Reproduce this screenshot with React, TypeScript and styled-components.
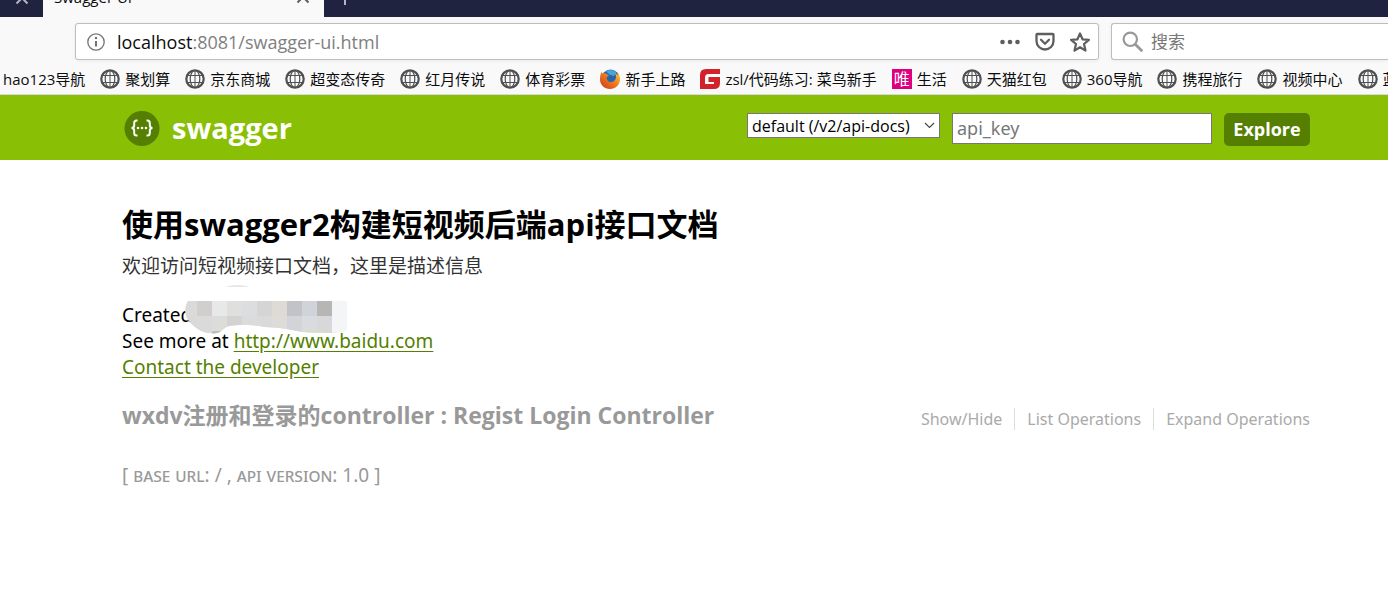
import React from 'react';
import styled, { createGlobalStyle } from 'styled-components';

const uiFont = '"Open Sans", "Noto Sans CJK SC", sans-serif';
const docFont = '"Noto Sans", "Noto Sans CJK SC", sans-serif';
const headFont = '"Open Sans", "Noto Sans CJK SC", sans-serif';

const GlobalStyle = createGlobalStyle`
  * { box-sizing: border-box; }
  body { margin: 0; background: #fff; font-family: ${docFont}; overflow-x: hidden; }
  h1, h2, p, ul { margin: 0; padding: 0; }
  ul { list-style: none; }
  button, input, select { font-family: inherit; }
`;

const TabStrip = styled.div`
  display: flex;
  align-items: flex-end;
  height: 17px;
  overflow: hidden;
  background: #202340;
  font-family: ${uiFont};
`;

const TabButton = styled.button<{ $width: number; $dark?: boolean }>`
  display: flex;
  align-items: center;
  justify-content: center;
  width: ${(p) => p.$width}px;
  height: 38px;
  padding: 0;
  border: 0;
  background: none;
  color: ${(p) => (p.$dark ? '#5e5e5f' : '#b4b5c2')};
`;

const ActiveTab = styled.div`
  display: flex;
  align-items: center;
  justify-content: space-between;
  width: 281px;
  height: 40px;
  padding-left: 11px;
  background: #f9f9fa;
  color: #0c0c0d;
  font-size: 15px;
  line-height: 20px;
`;

const NavBar = styled.div`
  display: flex;
  gap: 12px;
  padding: 6px 0 3px 75px;
  background: #f9f9fa;
  font-family: ${uiFont};
`;

const Field = styled.div<{ $search?: boolean }>`
  display: flex;
  align-items: center;
  flex: ${(p) => (p.$search ? '0 0 277px' : '1 1 auto')};
  min-width: 0;
  height: 37px;
  gap: ${(p) => (p.$search ? 7 : 11)}px;
  padding: 0 ${(p) => (p.$search ? 0 : 7)}px 0 10px;
  border: 1px solid #bdbdbe;
  border-right-width: ${(p) => (p.$search ? 0 : 1)}px;
  border-radius: ${(p) => (p.$search ? '3px 0 0 3px' : '3px')};
  background: #fff;
  box-shadow: 0 1px 4px rgba(0, 0, 0, 0.06);
`;

const Address = styled.div`
  flex: 1;
  min-width: 0;
  overflow: hidden;
  white-space: nowrap;
  color: #808080;
  font-size: 18px;
  line-height: 26px;
`;

const Host = styled.span`
  color: #0c0c0d;
`;

const SearchInput = styled.input`
  flex: 1;
  min-width: 0;
  padding: 0;
  border: 0;
  outline: 0;
  background: none;
  font-size: 17px;
  &::placeholder { color: #777; opacity: 1; }
`;

const FieldActions = styled.div`
  display: flex;
  align-items: center;
  gap: 13px;
`;

const IconButton = styled.button`
  display: flex;
  padding: 0;
  border: 0;
  background: none;
  color: #5e5e5f;
`;

const Bookmarks = styled.ul`
  display: flex;
  gap: 15px;
  height: 32px;
  padding: 1px 0 0 3px;
  overflow: hidden;
  border-bottom: 1px solid #d9d9dc;
  background: #f9f9fa;
  font-family: ${uiFont};
`;

const BookmarkLink = styled.a`
  display: flex;
  align-items: center;
  gap: 5px;
  height: 30px;
  color: #0c0c0d;
  font-size: 15px;
  line-height: 20px;
  text-decoration: none;
  white-space: nowrap;
  svg { flex: none; }
`;

const LifeBadge = styled.span`
  width: 20px;
  height: 20px;
  background: #e0007f;
  color: #fff;
  font-size: 16px;
  line-height: 20px;
  text-align: center;
`;

const Header = styled.header`
  display: flex;
  justify-content: space-between;
  align-items: flex-start;
  height: 65px;
  padding: 15px 78px 0 124px;
  background: #89bf04;
`;

const Brand = styled.a`
  display: flex;
  align-items: center;
  gap: 12px;
  color: #fff;
  font: 700 29px/34px ${headFont};
  text-decoration: none;
`;

const Controls = styled.form`
  display: flex;
  align-items: flex-start;
  gap: 12px;
  padding-top: 3px;
`;

const SelectBox = styled.div`
  display: grid;
  align-items: center;
  justify-items: end;
  width: 193px;
  height: 25px;
  font-family: ${uiFont};
  > * { grid-area: 1 / 1; }
  svg { margin-right: 5px; pointer-events: none; }
`;

const Select = styled.select`
  width: 100%;
  height: 25px;
  padding: 0 20px 0 4px;
  border: 1px solid #777;
  border-radius: 0;
  background: #fff;
  color: #000;
  font-size: 16px;
  line-height: 22px;
  appearance: none;
`;

const KeyInput = styled.input`
  width: 260px;
  height: 31px;
  padding: 0 4px 2px;
  border: 1px solid #777;
  background: #fff;
  font-size: 18px;
  &::placeholder { color: #777; opacity: 1; }
`;

const ExploreButton = styled.button`
  width: 86px;
  height: 33px;
  padding: 0 0 2px;
  border: 0;
  border-radius: 5px;
  background: #547f00;
  color: #fff;
  font-family: ${headFont};
  font-size: 18px;
  font-weight: 700;
`;

const Content = styled.main`
  padding: 41px 78px 0 122px;
`;

const Title = styled.h1`
  color: #000;
  font: 700 31px/46px ${headFont};
`;

const Description = styled.p`
  color: #333;
  font-size: 19px;
  line-height: 38px;
`;

const Info = styled.div`
  position: relative;
  padding-top: 17px;
  color: #000;
  font-size: 19px;
  line-height: 26px;
`;

const Mosaic = styled.svg`
  position: absolute;
  top: 0;
  left: 63px;
`;

const GreenLink = styled.a`
  color: #547f00;
  text-underline-offset: 3px;
`;

const Resource = styled.section`
  display: flex;
  align-items: flex-start;
  justify-content: space-between;
  padding-top: 17px;
`;

const ResourceTitle = styled.h2`
  color: #999;
  font: 700 23px/36px ${headFont};
`;

const Options = styled.ul`
  display: flex;
  padding-top: 11px;
  li + li { margin-left: 12px; padding-left: 12px; border-left: 1px solid #ddd; }
`;

const OptionLink = styled.a`
  color: #aaa;
  font-size: 16px;
  line-height: 21px;
  text-decoration: none;
`;

const Version = styled.p`
  padding-top: 28px;
  color: #999;
  font-size: 19px;
  line-height: 28px;
`;

const SmallCaps = styled.span`
  font-variant: small-caps;
`;

const Cross = () => (
  <svg width="14" height="14" viewBox="0 0 14 14" fill="none" stroke="currentColor" strokeWidth="2">
    <path d="M1.500 1.500l11 11M12.500 1.500l-11 11" />
  </svg>
);

const Plus = () => (
  <svg width="16" height="16" viewBox="0 0 16 16" fill="none" stroke="currentColor" strokeWidth="2">
    <path d="M8 1v14M1 8h14" />
  </svg>
);

const Globe = () => (
  <svg width="20" height="20" viewBox="0 0 20 20" fill="none" stroke="#505053">
    <circle cx="10" cy="10" r="8.700" strokeWidth="2.200" />
    <ellipse cx="10" cy="10" rx="4.800" ry="8.500" strokeWidth="1.200" />
    <path d="M10 1v18M2.500 6.500h15M2.500 13.500h15" strokeWidth="1" />
  </svg>
);

const Firefox = () => (
  <svg width="20" height="20" viewBox="0 0 20 20">
    <defs>
      <linearGradient id="fox" x1="1" y1="0" x2="0" y2="1">
        <stop offset="0" stopColor="#ffcf3a" />
        <stop offset=".45" stopColor="#f07c1f" />
        <stop offset="1" stopColor="#c9351c" />
      </linearGradient>
    </defs>
    <circle cx="10.500" cy="9.500" r="9" fill="#2466a8" />
    <path d="M6 2.500c3-2.500 8-2 10.500 1.500l-3 3-4-1.500z" fill="#49a5dc" />
    <path d="M1.500 2.500C1.700 4 2.200 4.300 3 4.500 4.500 4 6 4.300 7 5.200l2 1.300-2.500 1.700c.3 3.300 2 4.900 4.300 4.800 2.800-.1 4.200-1.700 5-3.500.4-2 .2-3.500-.8-5 1.500.4 2.200 1 2.700 1.800V3.200C19 5.500 20 8 20 10.500 19.800 16 15.500 20 10 20 4.500 20 0 15.800 0 10.500 0 7.500.6 5 1.500 2.500z" fill="url(#fox)" />
  </svg>
);

const Gitee = () => (
  <svg width="20" height="20" viewBox="0 0 20 20">
    <path d="M6 0h14v5H8.500Q5 5 5 8.500V15h9v-2H8.500V8H20v6q0 6-6 6H0V6q0-6 6-6z" fill="#d2232c" />
  </svg>
);

const InfoIcon = () => (
  <svg width="20" height="20" viewBox="0 0 20 20" fill="none" stroke="#737373">
    <circle cx="10" cy="10" r="8.200" strokeWidth="1.300" />
    <path d="M10 9v5.500" strokeWidth="2" />
    <circle cx="10" cy="6" r="1.200" fill="#737373" stroke="none" />
  </svg>
);

const Dots = () => (
  <svg width="22" height="22" viewBox="0 0 22 22" fill="currentColor">
    <circle cx="3.500" cy="11" r="2.300" />
    <circle cx="11" cy="11" r="2.300" />
    <circle cx="18.500" cy="11" r="2.300" />
  </svg>
);

const Pocket = () => (
  <svg width="22" height="22" viewBox="0 0 22 22" fill="none" stroke="currentColor" strokeWidth="2.300" strokeLinecap="round" strokeLinejoin="round">
    <path d="M3.300 3h15.400q.8 0 .8.800v6.200a8.500 8.500 0 0 1-17 0V3.800q0-.8.800-.8z" />
    <path d="M7 8.800l4 3.900 4-3.900" />
  </svg>
);

const Star = () => (
  <svg width="22" height="22" viewBox="0 0 22 22" fill="none" stroke="currentColor" strokeWidth="2.200" strokeLinejoin="round">
    <path d="M11 2.400l2.500 5.900 6.400.5-4.900 4.200 1.500 6.600-5.500-3.400-5.500 3.400L7 13 2.100 8.800l6.400-.5z" />
  </svg>
);

const Magnifier = () => (
  <svg width="22" height="22" viewBox="0 0 22 22" fill="none" stroke="#999">
    <circle cx="8.300" cy="8.300" r="6.700" strokeWidth="2.200" />
    <path d="M13 13l7.300 7.300" strokeWidth="2.800" />
  </svg>
);

const SwaggerMark = () => (
  <svg width="36" height="36" viewBox="0 0 36 36">
    <circle cx="18" cy="18.500" r="17.500" fill="#547f00" />
    <g fill="none" stroke="#fff" strokeWidth="2">
      <path d="M13.500 10.500h-1q-2.300 0-2.300 2.500v2.200q0 2.800-2.700 2.800 2.700 0 2.700 2.800v2.200q0 2.500 2.300 2.500h1" />
      <path d="M22.500 10.500h1q2.300 0 2.300 2.500v2.200q0 2.800 2.700 2.800-2.700 0-2.700 2.800v2.200q0 2.500-2.300 2.500h-1" />
    </g>
    <g fill="#fff">
      <circle cx="14" cy="18" r="1.300" />
      <circle cx="18" cy="18" r="1.300" />
      <circle cx="22" cy="18" r="1.300" />
    </g>
  </svg>
);

const mosaicRows = [
  ['#dadada', '#d0cfce', '#e7e9e8', '#dfdfdd', '#dcddde', '#d5d5d6', '#dedad6', '#c3c3c7', '#d0d4da', '#b8b6b5', '#f4f5f7'],
  ['#d9d9d8', '#dadada', '#dcdcdb', '#d3d3d3', '#dadbdb', '#dadada', '#dedcd9', '#d3d4d8', '#dadbdf', '#d8d7d9', '#f4f5f7'],
];

const NameMosaic = () => (
  <Mosaic width="163" height="52" viewBox="0 0 163 52" aria-hidden="true">
    <defs>
      <clipPath id="smear">
        <path d="M3 16H162V43q-2 4-8 4-8 1.500-16 .5-14 .5-26-1.500-14-3.500-32-4-18-3.500-32-1.500-6 0-10 4-4 4-10 4-10 0-18-6.500Q-1 33 .5 24 1 19 3 16z" />
      </clipPath>
    </defs>
    <path d="M40 2q12-4 25 0z" fill="#e6e6e6" />
    <g clipPath="url(#smear)">
      <rect width="163" height="52" fill="#d9d9d9" />
      {mosaicRows.map((row, y) =>
        row.map((fill, i) => (
          <rect key={`${y}-${i}`} x={i * 15 - 3} y={16 + y * 15} width="15" height={y ? 17 : 15} fill={fill} />
        )),
      )}
      <rect x="27" y="46" width="15" height="5" fill="#bdbdbd" />
      <rect x="102" y="46" width="45" height="3" fill="#d5dfc0" />
    </g>
  </Mosaic>
);

const bookmarks: { label: string; icon?: React.ReactNode }[] = [
  { label: 'hao123导航' },
  { label: '聚划算', icon: <Globe /> },
  { label: '京东商城', icon: <Globe /> },
  { label: '超变态传奇', icon: <Globe /> },
  { label: '红月传说', icon: <Globe /> },
  { label: '体育彩票', icon: <Globe /> },
  { label: '新手上路', icon: <Firefox /> },
  { label: 'zsl/代码练习: 菜鸟新手', icon: <Gitee /> },
  { label: '生活', icon: <LifeBadge>唯</LifeBadge> },
  { label: '天猫红包', icon: <Globe /> },
  { label: '360导航', icon: <Globe /> },
  { label: '携程旅行', icon: <Globe /> },
  { label: '视频中心', icon: <Globe /> },
  { label: '蓝', icon: <Globe /> },
];

export default function App() {
  return (
    <>
      <GlobalStyle />
      <TabStrip>
        <TabButton $width={43} aria-label="Close previous tab"><Cross /></TabButton>
        <ActiveTab>
          Swagger UI
          <TabButton $width={42} $dark aria-label="Close tab"><Cross /></TabButton>
        </ActiveTab>
        <TabButton $width={42} aria-label="New tab"><Plus /></TabButton>
      </TabStrip>
      <NavBar>
        <Field>
          <InfoIcon />
          <Address><Host>localhost</Host>:8081/swagger-ui.html</Address>
          <FieldActions>
            <IconButton aria-label="Page actions"><Dots /></IconButton>
            <IconButton aria-label="Save to Pocket"><Pocket /></IconButton>
            <IconButton aria-label="Bookmark this page"><Star /></IconButton>
          </FieldActions>
        </Field>
        <Field $search>
          <Magnifier />
          <SearchInput placeholder="搜索" aria-label="搜索" />
        </Field>
      </NavBar>
      <Bookmarks>
        {bookmarks.map((b) => (
          <li key={b.label}>
            <BookmarkLink href="#">{b.icon}{b.label}</BookmarkLink>
          </li>
        ))}
      </Bookmarks>
      <Header>
        <Brand href="#"><SwaggerMark />swagger</Brand>
        <Controls onSubmit={(e) => e.preventDefault()}>
          <SelectBox>
            <Select aria-label="API group">
              <option>default (/v2/api-docs)</option>
            </Select>
            <svg width="11" height="7" viewBox="0 0 11 7" fill="none" stroke="#444" strokeWidth="1.100">
              <path d="M1 1l4.500 4.500L10 1" />
            </svg>
          </SelectBox>
          <KeyInput placeholder="api_key" aria-label="api_key" />
          <ExploreButton>Explore</ExploreButton>
        </Controls>
      </Header>
      <Content>
        <Title>使用swagger2构建短视频后端api接口文档</Title>
        <Description>欢迎访问短视频接口文档，这里是描述信息</Description>
        <Info>
          <p>Created</p>
          <p>See more at <GreenLink href="#">http://www.baidu.com</GreenLink></p>
          <p><GreenLink href="#">Contact the developer</GreenLink></p>
          <NameMosaic />
        </Info>
        <Resource>
          <ResourceTitle>wxdv注册和登录的controller : Regist Login Controller</ResourceTitle>
          <Options>
            <li><OptionLink href="#">Show/Hide</OptionLink></li>
            <li><OptionLink href="#">List Operations</OptionLink></li>
            <li><OptionLink href="#">Expand Operations</OptionLink></li>
          </Options>
        </Resource>
        <Version>
          [ <SmallCaps>base url</SmallCaps>: / , <SmallCaps>api version</SmallCaps>: 1.0 ]
        </Version>
      </Content>
    </>
  );
}
